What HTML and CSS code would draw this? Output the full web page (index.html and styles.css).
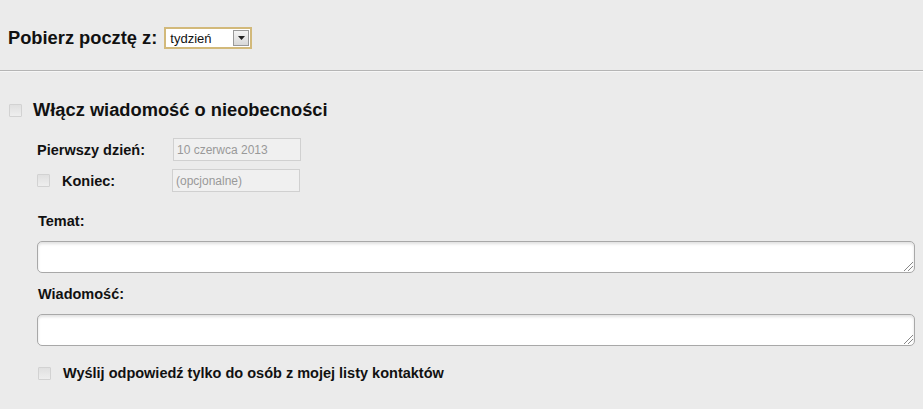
FILE: index.html
```html
<!DOCTYPE html>
<html lang="pl">
<head>
<meta charset="utf-8">
<link rel="stylesheet" href="styles.css">
</head>
<body>
<div class="top">
  <span class="big">Pobierz pocztę z:</span>
  <div class="select"><span class="sel-text">tydzień</span><span class="sel-btn"><svg width="7" height="4" viewBox="0 0 7 4"><path d="M0 0H7L3.5 4Z" fill="#222"/></svg></span></div>
</div>
<div class="rule"></div>
<div class="section">
  <div class="enable-row"><span class="cb"></span><span class="big">Włącz wiadomość o nieobecności</span></div>
  <div class="dates">
    <div class="date-row"><span class="lbl first">Pierwszy dzień:</span><span class="inp">10 czerwca 2013</span></div>
    <div class="date-row"><span class="cb small"></span><span class="lbl end">Koniec:</span><span class="inp">(opcjonalne)</span></div>
  </div>
  <div class="field">
    <div class="lbl">Temat:</div>
    <div class="ta"><span class="grip"></span></div>
  </div>
  <div class="field">
    <div class="lbl">Wiadomość:</div>
    <div class="ta"><span class="grip"></span></div>
  </div>
  <div class="contacts"><span class="cb small"></span><span class="lbl">Wyślij odpowiedź tylko do osób z mojej listy kontaktów</span></div>
</div>
</body>
</html>
```
FILE: styles.css
```css
html, body { margin: 0; padding: 0; }
body {
  background: #ebebeb;
  font-family: "Liberation Sans", Arial, sans-serif;
  color: #111;
  width: 923px;
  height: 409px;
  overflow: hidden;
}
.top {
  display: flex;
  align-items: center;
  gap: 7px;
  padding: 27px 0 0 8px;
  height: 22px;
}
.big { font-weight: bold; font-size: 18.3px; line-height: 22px; }
.select {
  display: flex;
  align-items: center;
  justify-content: space-between;
  box-sizing: border-box;
  width: 88px;
  height: 22px;
  border: 2px solid #d2b97a;
  background: #fff;
  padding: 0 1px 0 4px;
}
.sel-text { font-size: 13px; font-family: "Liberation Sans", Arial, sans-serif; color: #111; }
.sel-btn {
  display: flex;
  align-items: center;
  justify-content: center;
  width: 14px;
  height: 14px;
  border: 1px solid #999;
  background: linear-gradient(#f4f4f4, #d8d8d8);
}
.rule {
  margin-top: 21px;
  height: 1px;
  background: #b5b5b5;
  border-bottom: 1px solid #f6f6f6;
}
.section { padding: 0 8px 0 9px; }
.enable-row {
  display: flex;
  align-items: center;
  gap: 11px;
  margin-top: 27px;
  height: 22px;
}
.cb {
  display: inline-block;
  box-sizing: border-box;
  width: 13px;
  height: 13px;
  border: 1px solid #d2d2d2;
  background: linear-gradient(#e0e0e0, #eeeeee);
  border-radius: 1px;
}
.dates { margin-top: 17px; padding-left: 28px; display: flex; flex-direction: column; gap: 9px; }
.date-row { display: flex; align-items: center; height: 22px; }
.lbl { font-weight: bold; font-size: 14.5px; line-height: 17px; }
.date-row .lbl { padding-top: 3px; }
.lbl.first { width: 136px; }
.cb.small { margin-right: 12px; }
.lbl.end { width: 110px; }
.inp {
  box-sizing: border-box;
  width: 128px;
  height: 23px;
  border: 1px solid #d0d0d0;
  background: #f0f0f0;
  color: #999;
  font-size: 12px;
  padding: 4px 3px 0;
  line-height: 14px;
}
.field { padding-left: 28px; }
.dates + .field { margin-top: 22px; }
.field + .field { margin-top: 13px; }
.field .lbl { margin-left: 1px; margin-bottom: 11px; }
.ta {
  position: relative;
  box-sizing: border-box;
  height: 32px;
  width: 878px;
  border: 1px solid #a8a8a8;
  border-radius: 5px;
  background: #fff;
  box-shadow: inset 0 2px 3px rgba(0,0,0,0.12);
}
.grip {
  position: absolute;
  right: 1px;
  bottom: 1px;
  width: 9px;
  height: 9px;
  background: linear-gradient(135deg, transparent 45%, #888 45%, #888 52%, transparent 52%, transparent 70%, #888 70%, #888 77%, transparent 77%);
}
.contacts {
  display: flex;
  align-items: center;
  margin-top: 19px;
  padding-left: 29px;
  height: 17px;
}
```
